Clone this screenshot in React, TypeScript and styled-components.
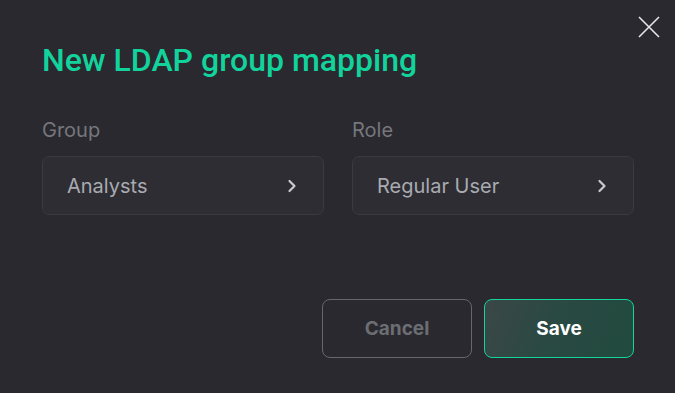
import styled, { createGlobalStyle } from 'styled-components';

const GlobalStyle = createGlobalStyle`
  html, body {
    margin: 0;
    padding: 0;
    background: #29292f;
  }
  * { box-sizing: border-box; }
`;

interface SelectProps {
  label: string;
  value: string;
}

const Chevron = () => (
  <svg width="10" height="14" viewBox="0 0 10 14" fill="none">
    <path d="M2.5 2 L7.5 7 L2.5 12" stroke="#c9cbd0" strokeWidth="2.2" strokeLinecap="round" strokeLinejoin="round" />
  </svg>
);

const SelectField = ({ label, value }: SelectProps) => {
  return (
    <FieldStyle>
      <div className='fieldLabel'>{label}</div>
      <button className='fieldBox'>
        <span>{value}</span>
        <Chevron />
      </button>
    </FieldStyle>
  );
};

const App = () => {
  return (
    <>
      <GlobalStyle />
      <DialogStyle>
        <CloseButton aria-label='close'>
          <svg width="22" height="22" viewBox="0 0 22 22">
            <path d="M1 1 L21 21 M21 1 L1 21" stroke="#e6e6e8" strokeWidth="1.6" />
          </svg>
        </CloseButton>
        <Title>New LDAP group mapping</Title>
        <FieldRow>
          <SelectField label='Group' value='Analysts' />
          <SelectField label='Role' value='Regular User' />
        </FieldRow>
        <Actions>
          <ActionButton $primary={false}>Cancel</ActionButton>
          <ActionButton $primary>Save</ActionButton>
        </Actions>
      </DialogStyle>
    </>
  );
};

const DialogStyle = styled.div`
  position: relative;
  width: 675px;
  height: 393px;
  background: #29292f;
  padding: 41px 41px 0 42px;
  display: flex;
  flex-direction: column;
  font-family: Inter, "Noto Sans", sans-serif;
`;

const CloseButton = styled.button`
  position: absolute;
  top: 16px;
  right: 15px;
  background: none;
  border: none;
  padding: 0;
  display: flex;
  cursor: pointer;
`;

const Title = styled.h1`
  margin: 0;
  font-family: Roboto, "Noto Sans", sans-serif;
  font-weight: 500;
  font-size: 32px;
  line-height: 38px;
  color: #12d39c;
`;

const FieldRow = styled.div`
  display: grid;
  grid-template-columns: 1fr 1fr;
  gap: 28px;
  margin-top: 39px;
`;

const FieldStyle = styled.div`
  display: flex;
  flex-direction: column;
  gap: 14px;

  .fieldLabel {
    font-size: 20px;
    line-height: 24px;
    color: #76777c;
  }

  .fieldBox {
    display: flex;
    align-items: center;
    justify-content: space-between;
    height: 59px;
    padding: 0 26px 0 24px;
    background: #2d2d33;
    border: 1px solid #383b42;
    border-radius: 7px;
    font-family: inherit;
    font-size: 20px;
    color: #a9abb1;
    text-align: left;
  }
`;

const Actions = styled.div`
  display: flex;
  justify-content: flex-end;
  gap: 12px;
  margin-top: 84px;
`;

const ActionButton = styled.button<{ $primary: boolean }>`
  width: 150px;
  height: 59px;
  border-radius: 8px;
  font-family: Inter, "Liberation Sans", sans-serif;
  font-weight: 700;
  font-size: 19px;
  cursor: pointer;
  color: ${({ $primary }) => ($primary ? '#ffffff' : '#6d6e73')};
  border: 1px solid ${({ $primary }) => ($primary ? '#12d69b' : '#66676c')};
  background: ${({ $primary }) =>
    $primary ? 'linear-gradient(110deg, #3b4747 0%, #2a4943 45%, #214a3e 100%)' : 'transparent'};
`;

export default App;
